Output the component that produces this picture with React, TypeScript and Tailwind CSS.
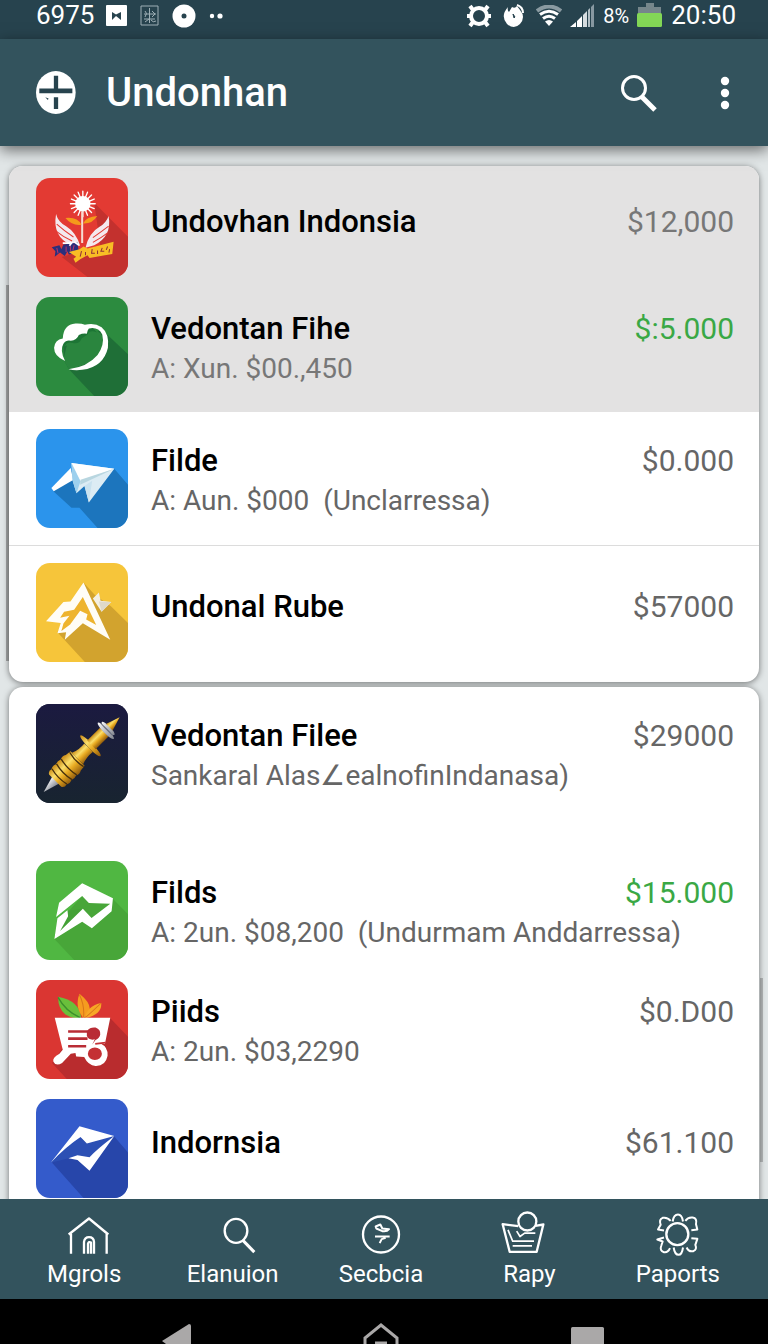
import React from 'react';

interface Account {
  id: number;
  name: string;
  detail?: string;
  amount: string;
  positive?: boolean;
  spacing: string;
  logo: React.ReactNode;
}

const FlowerLogo = () => (
  <svg viewBox="108 52 275 292" preserveAspectRatio="none" className="h-full w-full bg-[#e33a33]">
    <path d="M282 125 L383 225 V344 H262 L185 285 L300 250 Z" fill="#c3312e" />
    <g stroke="#fff" strokeWidth="6" strokeLinecap="round">
      <path d="M248 91 V166 M211 128 H285 M222 102 L274 154 M274 102 L222 154 M234 94 L262 162 M262 94 L234 162 M214 114 L282 142 M214 142 L282 114" strokeWidth="4" />
      <circle cx="248" cy="128" r="20" fill="#fff" />
    </g>
    <path d="M246 150 V244" stroke="#f6dcd2" strokeWidth="6" fill="none" />
    <path d="M196 170 Q232 166 244 190 Q216 194 196 170 Z M291 164 Q258 166 248 186 Q276 188 291 164 Z" fill="#f59a1b" />
    <path d="M168 158 Q174 182 198 194 Q228 212 240 252 L214 250 Q156 226 168 158 Z" fill="#f4e9ee" />
    <path d="M325 164 Q318 184 298 196 Q266 214 256 258 L282 250 Q336 224 325 164 Z" fill="#f4e9ee" />
    <path d="M170 188 Q190 206 220 226 M170 210 Q190 226 216 238 M325 194 Q304 210 278 228 M322 214 Q304 228 278 242" stroke="#e33a33" strokeWidth="3" fill="none" />
    <path d="M155 256 L178 250 L184 262 L190 248 L232 242 L236 272 L206 278 L202 268 L194 282 L180 272 L164 284 L166 268 Z" fill="#2c2f7c" />
    <path d="M170 258 L174 274 M198 254 V270 M210 252 L212 268 M222 250 L218 266" stroke="#b9356b" strokeWidth="3" />
    <path d="M188 244 H214 L208 252 M222 240 L236 250" stroke="#fff" strokeWidth="5" fill="none" />
    <path d="M206 270 L238 262 L250 254 L262 260 L340 240 L336 276 L268 288 L262 280 L240 292 L226 302 L220 290 L228 284 Z" fill="#f8bd25" />
    <path d="M244 268 L240 284 M256 270 V280 M276 262 L274 274 H284 M292 266 V276 M306 258 L302 268 H312 M322 254 L318 264 M328 262 L326 272" stroke="#8f2e3a" strokeWidth="3" fill="none" />
  </svg>
);

const LeafLogo = () => (
  <svg viewBox="108 409 275 299" preserveAspectRatio="none" className="h-full w-full bg-[#2c8b3f]">
    <path d="M314 516 L383 582 V708 H282 L207 628 L192 600 L190 560 L220 545 L300 510 Z" fill="#1f6f37" />
    <path d="M200 556 Q204 544 218 546 Q236 548 242 536 Q250 524 268 514 Q294 504 308 530 Q316 580 270 606 Q232 622 207 628 L190 598 Z" fill="#2a853e" />
    <path d="M186 556 Q190 570 198 552 Q204 544 218 548 Q238 552 244 534 L262 522 Q270 506 290 516 L278 502 L204 530 Z" fill="#1d7535" />
    <path d="M195 602 Q162 588 162 562 Q164 538 188 534 Q190 492 226 489 Q244 488 254 493 Q282 485 304 500 Q328 520 323 562 Q310 620 246 629 Q224 632 205 627 Q262 620 292 584 Q314 552 306 522 Q294 498 266 504 Q262 508 260 520 Q248 518 236 524 Q230 540 212 541 Q198 538 190 550 Q178 570 195 602 Z" fill="#fff" />
  </svg>
);

const PlaneLogo = () => (
  <svg viewBox="108 54 275 299" preserveAspectRatio="none" className="h-full w-full bg-[#2b94ec]">
    <path d="M342 174 L383 222 V353 H292 L238 292 H214 L160 242 L214 180 Z" fill="#1c75bd" />
    <path d="M212 172 L154 232 L161 242 L219 208 Z" fill="#fff" />
    <path d="M214 157 L218 212 L229 248 L253 226 L266 276 L342 174 Z" fill="#dcecf4" />
    <path d="M214 157 L342 174 L241 212 Z" fill="#fff" />
    <path d="M214 157 L241 212 L229 248 L217 208 Z" fill="#9dd0ee" />
    <path d="M241 207 L342 174 L240 222 Z" fill="#b8d6e0" />
    <path d="M253 226 L266 276 L276 210 Z" fill="#c9e2ef" />
  </svg>
);

const PeakLogo = () => (
  <svg viewBox="108 459 275 299" preserveAspectRatio="none" className="h-full w-full bg-[#f6c53a]">
    <path d="M250 518 L284 556 L332 590 L383 640 V758 H254 L172 668 L206 610 Z" fill="#d2a32e" />
    <path d="M250 560 L290 650 L248 630 L206 672 L186 660 L182 610 Z" fill="#eeb42e" />
    <path d="M278 566 L296 548 L301 573 L333 577 L304 606 Z" fill="#f4f0e4" />
    <path d="M296 575 L333 577 L304 606 Z" fill="#dfd9c8" />
    <path fillRule="evenodd" d="M250 518 L330 691 L248 641 L194 691 L198 668 L172 671 L182 640 L138 635 L190 577 L211 575 Z M248 562 L222 600 L192 606 L180 624 L208 618 L190 642 L184 664 L210 645 L240 603 L262 614 L258 630 L288 646 Z" fill="#fffdf6" />
  </svg>
);

const ToolLogo = () => (
  <svg viewBox="108 70 275 295" preserveAspectRatio="none" className="h-full w-full bg-[#191a3a]">
    <defs>
      <linearGradient id="night" x1="0" y1="0" x2="0" y2="1">
        <stop offset="0" stopColor="#1b1a40" />
        <stop offset="1" stopColor="#182430" />
      </linearGradient>
      <linearGradient id="gold" x1="0" y1="0" x2="0" y2="1">
        <stop offset="0" stopColor="#c98a16" />
        <stop offset="0.35" stopColor="#fbdf6b" />
        <stop offset="0.6" stopColor="#e9ab22" />
        <stop offset="1" stopColor="#8f5a0c" />
      </linearGradient>
      <linearGradient id="steel" x1="0" y1="0" x2="0" y2="1">
        <stop offset="0" stopColor="#f8f8fa" />
        <stop offset="1" stopColor="#80848e" />
      </linearGradient>
    </defs>
    <rect x="108" y="70" width="275" height="295" fill="url(#night)" />
    <g transform="translate(131 332) rotate(-44.500)">
      <path d="M0 0 L52 -15 V15 Z" fill="url(#steel)" />
      <path d="M48 -26 Q54 -36 64 -32 Q74 -38 84 -33 Q94 -38 104 -33 Q114 -38 124 -32 L142 -30 V30 L124 32 Q114 38 104 33 Q94 38 84 33 Q74 38 64 32 Q54 36 48 26 Z" fill="url(#gold)" />
      <path d="M66 -32 Q58 0 66 32 M86 -33 Q78 0 86 33 M106 -33 Q98 0 106 33 M138 -30 Q130 0 138 30" stroke="#47300c" strokeWidth="4" fill="none" />
      <path d="M142 -24 Q164 -15 188 -18 V18 Q164 15 142 24 Z" fill="url(#gold)" />
      <ellipse cx="196" cy="0" rx="8" ry="43" fill="url(#gold)" />
      <path d="M200 -18 H254 V18 H200 Z" fill="url(#gold)" />
      <ellipse cx="260" cy="0" rx="7" ry="34" fill="url(#steel)" />
      <ellipse cx="270" cy="0" rx="7" ry="27" fill="url(#steel)" />
      <ellipse cx="265" cy="0" rx="2" ry="28" fill="#6b7080" />
      <path d="M275 -14 L318 0 L275 14 Z" fill="url(#gold)" />
    </g>
  </svg>
);

const BoltLogo = () => (
  <svg viewBox="108 540 275 297" preserveAspectRatio="none" className="h-full w-full bg-[#50b742]">
    <path d="M338 654 L383 700 V837 H222 L163 774 L206 690 L246 645 Z" fill="#48a639" />
    <path d="M163 774 L172 711 L203 689 L246 684 L222 724 Z" fill="#43a136" />
    <path d="M168 708 L177 665 L246 607 L338 652 L334 691 L275 742 L246 722 L163 774 L172 712 L202 688 L204 706 L180 750 L248 683 L274 711 L330 668 L266 666 L246 645 Z" fill="#fff" />
  </svg>
);

const BasketLogo = () => (
  <svg viewBox="108 41 275 302" preserveAspectRatio="none" className="h-full w-full bg-[#da3632]">
    <path d="M330 158 L383 214 V343 H200 L156 294 L200 230 Z" fill="#b92c2e" />
    <path d="M174 92 Q238 104 243 156 Q222 162 196 146 Q174 130 174 92 Z" fill="#6abf3b" />
    <path d="M174 94 Q196 136 240 156" stroke="#3c8f2c" strokeWidth="4" fill="none" />
    <path d="M238 83 Q278 116 266 140 L250 158 Q222 122 238 83 Z" fill="#f59c1f" />
    <path d="M303 111 Q306 146 254 158 Q260 120 303 111 Z" fill="#f7a726" />
    <path d="M238 86 Q254 120 250 156 M302 112 Q278 136 254 157" stroke="#d9761a" strokeWidth="3" fill="none" />
    <path d="M164 156 H330 L314 236 L300 234 Q324 246 322 272 Q316 304 286 303 Q264 302 252 276 L228 274 L226 264 L212 266 L186 294 Q168 306 160 290 Q156 278 178 266 L188 254 Z" fill="#fff" />
    <path d="M204 198 H262 M204 220 H262 M204 243 H258" stroke="#b92c35" strokeWidth="8" />
    <path d="M260 196 Q270 184 286 186 Q302 192 300 208 Q298 218 286 224 L276 238 L284 222 Q266 226 260 212 Z" fill="#b92c35" />
    <ellipse cx="284" cy="266" rx="21" ry="19" fill="#c43034" />
    <path d="M285 236 L316 232" stroke="#c43034" strokeWidth="5" />
  </svg>
);

const KiteLogo = () => (
  <svg viewBox="108 401 275 294" preserveAspectRatio="none" className="h-full w-full bg-[#345bcb]">
    <path d="M342 512 L383 560 V695 H250 L156 590 L240 516 Z" fill="#2746aa" />
    <path d="M152 590 Q196 544 240 515 L258 532 L342 511 L270 574 L206 577 Z" fill="#2c50b4" />
    <path d="M152 590 L238 482 L342 511 L260 533 L241 514 Q196 544 152 590 Z" fill="#fff" />
    <path d="M342 511 L268 614 L232 582 L205 577 L232 568 L268 574 Q288 552 342 511 Z" fill="#fff" />
  </svg>
);

const firstAccounts: Account[] = [
  { id: 1, name: 'Undovhan Indonsia', amount: '$12,000', spacing: 'bg-[#e3e2e2] pt-3 pb-2 text-[#777]', logo: <FlowerLogo /> },
  { id: 2, name: 'Vedontan Fihe', detail: 'A: Xun. $00.,450', amount: '$:5.000', positive: true, spacing: 'bg-[#e3e2e2] pt-3 pb-4 text-[#777]', logo: <LeafLogo /> },
  { id: 3, name: 'Filde', detail: 'A: Aun. $000  (Unclarressa)', amount: '$0.000', spacing: 'py-[17px] border-b border-[#dcdcdc] text-[#666]', logo: <PlaneLogo /> },
  { id: 4, name: 'Undonal Rube', amount: '$57000', spacing: 'pt-[17px] pb-5 text-[#666]', logo: <PeakLogo /> },
];

const secondAccounts: Account[] = [
  { id: 5, name: 'Vedontan Filee', detail: 'Sankaral Alas∠ealnofinIndanasa)', amount: '$29000', spacing: 'pt-[17px] pb-12 text-[#666]', logo: <ToolLogo /> },
  { id: 6, name: 'Filds', detail: 'A: 2un. $08,200  (Undurmam Anddarressa)', amount: '$15.000', positive: true, spacing: 'py-2.5 text-[#666]', logo: <BoltLogo /> },
  { id: 7, name: 'Piids', detail: 'A: 2un. $03,2290', amount: '$0.D00', spacing: 'py-2.5 text-[#666]', logo: <BasketLogo /> },
  { id: 8, name: 'Indornsia', amount: '$61.100', spacing: 'py-2.5 text-[#666]', logo: <KiteLogo /> },
];

const AccountRow: React.FC<{ account: Account }> = ({ account }) => (
  <li className={`flex items-center gap-[23px] pl-[27px] pr-[25px] ${account.spacing}`}>
    <div className="h-[99px] w-[92px] shrink-0 overflow-hidden rounded-[14px]">{account.logo}</div>
    <div className={`min-w-0 flex-1 ${account.detail ? 'pt-1' : 'pb-3'}`}>
      <div className="flex items-center justify-between leading-10">
        <h2 className="text-[31px] font-medium text-black">{account.name}</h2>
        <span className={`text-[30px] ${account.positive ? 'text-[#3aa845]' : ''}`}>{account.amount}</span>
      </div>
      {account.detail && <p className="whitespace-pre text-[28px] leading-10">{account.detail}</p>}
    </div>
  </li>
);

const StatusBar = () => (
  <div className="flex h-[39px] shrink-0 items-center justify-between bg-[#27434e] pb-2 pl-9 pr-8 text-[26px]">
    <div className="flex items-center gap-3">
      <span>6975</span>
      <svg width="22" height="22" viewBox="0 0 22 22">
        <rect width="21" height="21" rx="1" fill="#fff" />
        <path d="M6 7 L10 9.500 L15 7 V15 L10 11 L6 15 Z" fill="#27434e" />
      </svg>
      <svg width="20" height="22" viewBox="0 0 20 22" fill="none" stroke="#9fb0b6" strokeWidth="1">
        <path d="M1 1 H18 V20 H1 Z M9.500 3 V18 M4 9 H16 M4 14 H15 M5 6 Q8 8 5 12 M12 6 L15 9 L12 12 M5 17 L9 14 M11 15 Q13 18 16 16" />
      </svg>
      <svg width="24" height="24" viewBox="0 0 24 24">
        <circle cx="12" cy="12" r="11.500" fill="#fff" />
        <circle cx="12" cy="12" r="2.500" fill="#27434e" />
      </svg>
      <svg width="16" height="8" viewBox="0 0 16 8" fill="#fff">
        <circle cx="4" cy="4" r="2.200" />
        <circle cx="12" cy="4" r="2.600" />
      </svg>
    </div>
    <div className="flex items-center gap-2">
      <svg width="26" height="24" viewBox="0 0 26 24" fill="none" stroke="#fff">
        <circle cx="13" cy="12" r="8" strokeWidth="4" />
        <path d="M7 6 L4 2 M19 6 L22 2 M7 18 L4 22 M19 18 L22 22 M5 12 H1 M21 12 H25" strokeWidth="4" />
      </svg>
      <svg width="28" height="26" viewBox="0 0 28 26">
        <path d="M8 4 Q7 7 9 9 L12 4 Q15 6 17 3 L20 7 Q26 14 20 21 Q14 27 7 21 Q0 13 8 4 Z" fill="#fff" />
        <path d="M17 2 Q23 4 23 10" stroke="#fff" strokeWidth="2" fill="none" />
        <path d="M13 11 L15 14 L14 15 Z" fill="#27434e" stroke="#27434e" />
      </svg>
      <svg width="26" height="22" viewBox="0 0 26 22" fill="none" stroke="#fff" strokeWidth="3">
        <path d="M1 6 Q13 -3 25 6" stroke="#8a9aa1" strokeWidth="4" />
        <path d="M4 9.500 Q13 3 22 9.500 M7 13.500 Q13 9 19 13.500" />
        <path d="M9 16.500 Q13 13.500 17 16.500 L13 21 Z" fill="#fff" stroke="none" />
      </svg>
      <svg width="25" height="23" viewBox="0 0 25 23">
        <path d="M0 23 L6 18 V23 Z M7 17 L12 12 V23 H7 Z" fill="#fff" />
        <path d="M13 11 L17 7 V23 H13 Z" fill="#d6dde0" />
        <path d="M18 6 L20 4 V23 H18 Z" fill="#b2bfc5" />
        <path d="M21 3 L24 0 V23 H21 Z" fill="#8798a1" />
      </svg>
      <span className="text-[20px]">8%</span>
      <svg width="26" height="25" viewBox="0 0 26 25">
        <path d="M9 0 H17 V4 H24 V10 H1 V4 H9 Z" fill="#76868b" />
        <rect y="10" width="25" height="14" rx="1.500" fill="#83d756" />
      </svg>
      <span>20:50</span>
    </div>
  </div>
);

const navItems = [
  {
    label: 'Mgrols',
    icon: <path d="M204 130 L265 82 L323 130 M211 128 V188 M318 128 V188 M250 188 V152 Q252 138 265 138 Q279 138 280 152 V188 M262 188 V158 Q264 150 271 154 V188" />,
    viewBox: '184 60 135 140',
  },
  {
    label: 'Elanuion',
    icon: (
      <>
        <ellipse cx="708" cy="119" rx="34" ry="36" />
        <path d="M728 147 L763 183" strokeWidth="9" />
      </>
    ),
    viewBox: '630 60 135 140',
  },
  {
    label: 'Secbcia',
    icon: (
      <>
        <circle cx="182" cy="100" r="54" />
        <path d="M166 76 L180 70 L186 82 L206 84 Q200 92 186 90 L168 82 Z M164 106 H208 M196 110 L184 114 L178 126" strokeWidth="6" />
      </>
    ),
    viewBox: '116 30 135 140',
  },
  {
    label: 'Rapy',
    icon: (
      <>
        <path d="M401 105 L354 99 L375 182 H456 L476 100 L452 104" />
        <circle cx="428" cy="91" r="27" />
        <path d="M370 116 L384 150 H448 M384 164 H442 M396 120 L406 136 L420 126 H452" strokeWidth="5" />
      </>
    ),
    viewBox: '367 60 135 140',
  },
  {
    label: 'Paports',
    icon: (
      <>
        <circle cx="878" cy="134" r="33" />
        <path d="M864 96 Q867 75 880 75 Q892 75 895 96 M902 94 Q910 82 924 84 Q938 86 934 104 L938 120 L920 122 M920 146 L938 148 L932 166 Q938 180 926 185 Q912 188 906 174 M895 174 Q892 196 882 196 Q870 196 867 174 M856 176 Q850 190 838 188 Q824 184 830 168 L834 156 L818 150 L838 144 M838 123 L820 120 L828 106 Q822 90 834 85 Q848 82 858 94" strokeWidth="6" />
      </>
    ),
    viewBox: '811 65 135 140',
  },
];

const App: React.FC = () => (
  <div className="flex h-screen flex-col overflow-hidden bg-[#e1e6e7] font-[Roboto,sans-serif] text-white">
    <StatusBar />

    <header className="z-10 flex h-[107px] shrink-0 items-center bg-[#33535d] pl-9 pr-7 shadow-[0_4px_14px_rgba(0,0,0,0.55)]">
      <svg width="40" height="43" viewBox="107 208 121 128" preserveAspectRatio="none">
        <ellipse cx="167" cy="272" rx="60" ry="64" fill="#fff" />
        <path d="M161 222 H174 V260 H217 V274 H117 V260 H161 Z M161 286 H174 V321 H161 Z M135 286 L145 290 L143 294 Z" fill="#27434e" />
      </svg>
      <h1 className="ml-[30px] flex-1 text-[40px] font-medium">Undonhan</h1>
      <button type="button" aria-label="Search" className="mr-13">
        <svg width="38" height="38" viewBox="0 0 38 38" fill="none" stroke="#fff">
          <circle cx="14" cy="14" r="11.500" strokeWidth="3" />
          <path d="M22 23 L35 36" strokeWidth="5" />
        </svg>
      </button>
      <button type="button" aria-label="More options">
        <svg width="30" height="34" viewBox="0 0 30 34" fill="#fff">
          <circle cx="15" cy="5" r="4.200" />
          <circle cx="15" cy="17" r="4.200" />
          <circle cx="15" cy="29" r="4.200" />
        </svg>
      </button>
    </header>

    <main className="relative min-h-0 flex-1 overflow-hidden px-[9px] pt-5">
      <span className="absolute left-[6px] top-[139px] h-[376px] w-[3px] bg-[#a2a4a5]" />
      <span className="absolute right-[5px] top-[832px] h-[184px] w-[3px] bg-[#b3b6b7]" />
      <ul className="relative overflow-hidden rounded-[14px] bg-white shadow-[0_1px_6px_rgba(0,0,0,0.5)]">
        {firstAccounts.map((account) => (
          <AccountRow key={account.id} account={account} />
        ))}
      </ul>
      <ul className="relative mt-[5px] rounded-t-[14px] bg-white shadow-[0_1px_6px_rgba(0,0,0,0.5)]">
        {secondAccounts.map((account) => (
          <AccountRow key={account.id} account={account} />
        ))}
      </ul>
    </main>

    <nav className="z-10 flex h-[100px] shrink-0 bg-[#33535d] pl-2.5 pr-4">
      {navItems.map((item) => (
        <button key={item.label} type="button" className="flex flex-1 flex-col items-center pt-3">
          <svg width="45" height="47" viewBox={item.viewBox} fill="none" stroke="#fff" strokeWidth="7" strokeLinejoin="round" className="overflow-visible">
            {item.icon}
          </svg>
          <span className="text-[24px] leading-8">{item.label}</span>
        </button>
      ))}
    </nav>

    <div className="flex h-[45px] shrink-0 items-end justify-between bg-black pl-[162px] pr-[163px]">
      <button type="button" aria-label="Back">
        <svg width="29" height="20" viewBox="0 0 29 20">
          <path d="M0 17 L27 0 Q29 0 29 2 V20 H4 Z" fill="#aaa8a8" />
        </svg>
      </button>
      <button type="button" aria-label="Home">
        <svg width="36" height="21" viewBox="0 0 36 21" fill="none" stroke="#aaa8a8" strokeWidth="3">
          <path d="M2 21 V15 L18 2 L34 15 V21 M12 20 H24" />
        </svg>
      </button>
      <button type="button" aria-label="Recent apps">
        <svg width="34" height="17" viewBox="0 0 34 17">
          <rect width="33" height="20" rx="1.500" fill="#aaa8a8" />
        </svg>
      </button>
    </div>
  </div>
);

export default App;
